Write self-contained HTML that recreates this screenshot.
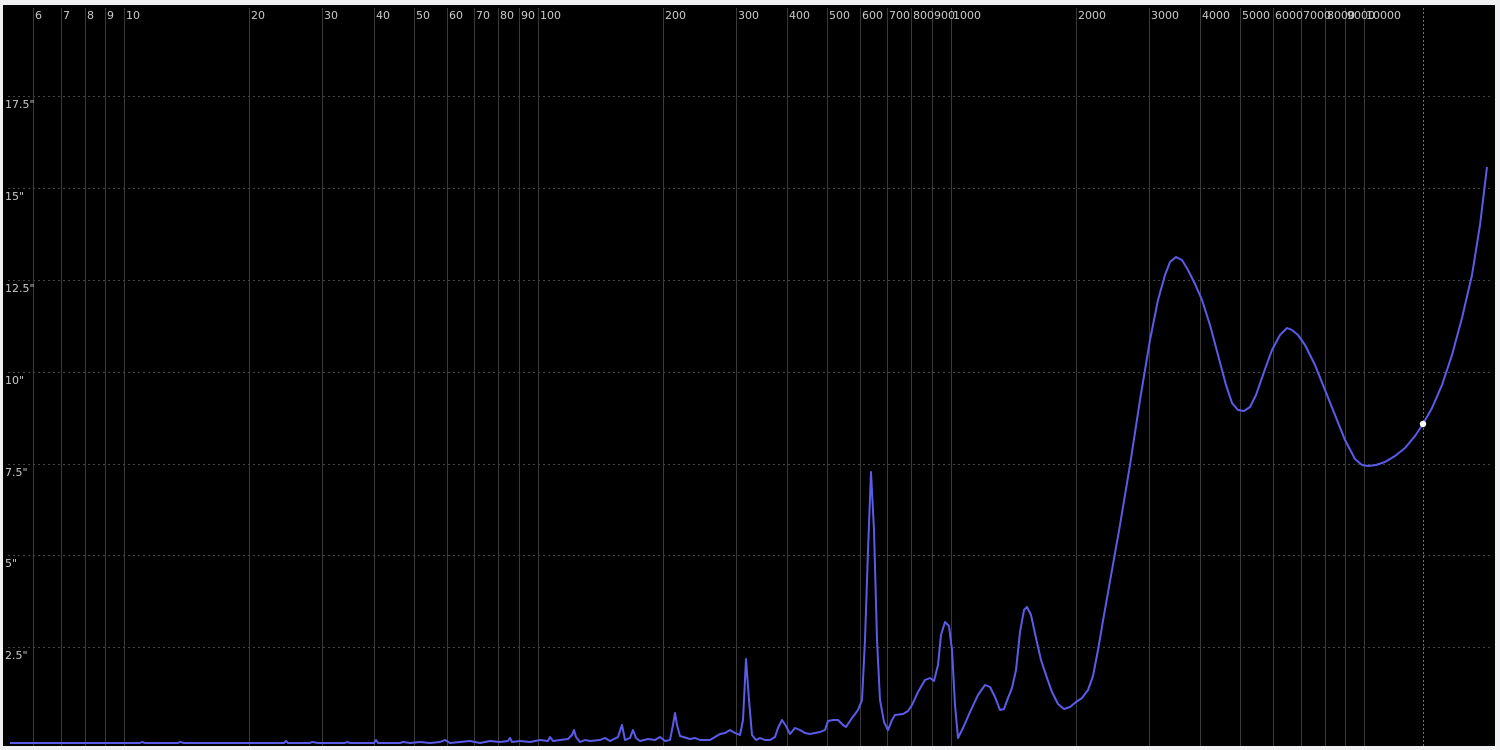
<!DOCTYPE html>
<html><head><style>
html,body{margin:0;padding:0;background:#f0f0f2;width:1500px;height:750px;overflow:hidden}
svg{position:absolute;left:0;top:0}
text{font-family:"DejaVu Sans","Liberation Sans",sans-serif;font-size:11px;fill:#c8c8c8}
</style></head><body>
<svg width="1500" height="750" viewBox="0 0 1500 750">
<rect x="3" y="5" width="1492" height="741" fill="#000"/>
<g stroke="#3a3a3a" stroke-width="1">
<line x1="33.5" y1="8" x2="33.5" y2="746"/><line x1="61.5" y1="8" x2="61.5" y2="746"/><line x1="85.5" y1="8" x2="85.5" y2="746"/><line x1="105.5" y1="8" x2="105.5" y2="746"/><line x1="124.5" y1="8" x2="124.5" y2="746"/>
<line x1="249.5" y1="8" x2="249.5" y2="746"/><line x1="322.5" y1="8" x2="322.5" y2="746"/><line x1="374.5" y1="8" x2="374.5" y2="746"/><line x1="414.5" y1="8" x2="414.5" y2="746"/><line x1="447.5" y1="8" x2="447.5" y2="746"/><line x1="474.5" y1="8" x2="474.5" y2="746"/><line x1="498.5" y1="8" x2="498.5" y2="746"/><line x1="519.5" y1="8" x2="519.5" y2="746"/><line x1="538.5" y1="8" x2="538.5" y2="746"/>
<line x1="663.5" y1="8" x2="663.5" y2="746"/><line x1="736.5" y1="8" x2="736.5" y2="746"/><line x1="787.5" y1="8" x2="787.5" y2="746"/><line x1="827.5" y1="8" x2="827.5" y2="746"/><line x1="860.5" y1="8" x2="860.5" y2="746"/><line x1="887.5" y1="8" x2="887.5" y2="746"/><line x1="911.5" y1="8" x2="911.5" y2="746"/><line x1="932.5" y1="8" x2="932.5" y2="746"/><line x1="951.5" y1="8" x2="951.5" y2="746"/>
<line x1="1076.5" y1="8" x2="1076.5" y2="746"/><line x1="1149.5" y1="8" x2="1149.5" y2="746"/><line x1="1200.5" y1="8" x2="1200.5" y2="746"/><line x1="1240.5" y1="8" x2="1240.5" y2="746"/><line x1="1273.5" y1="8" x2="1273.5" y2="746"/><line x1="1301.5" y1="8" x2="1301.5" y2="746"/><line x1="1325.5" y1="8" x2="1325.5" y2="746"/><line x1="1345.5" y1="8" x2="1345.5" y2="746"/><line x1="1364.5" y1="8" x2="1364.5" y2="746"/>
</g>
<line x1="1423.5" y1="8" x2="1423.5" y2="746" stroke="#7a7a10" stroke-dasharray="2,2"/>
<g stroke="#444" stroke-dasharray="2,3">
<line x1="8" y1="96.5" x2="1492" y2="96.5"/><line x1="8" y1="188.5" x2="1492" y2="188.5"/><line x1="8" y1="280.5" x2="1492" y2="280.5"/><line x1="8" y1="372.5" x2="1492" y2="372.5"/><line x1="8" y1="464.5" x2="1492" y2="464.5"/><line x1="8" y1="555.5" x2="1492" y2="555.5"/><line x1="8" y1="647.5" x2="1492" y2="647.5"/>
</g>
<g>
<text x="35" y="19">6</text><text x="63" y="19">7</text><text x="87" y="19">8</text><text x="107" y="19">9</text><text x="126" y="19">10</text>
<text x="251" y="19">20</text><text x="324" y="19">30</text><text x="376" y="19">40</text><text x="416" y="19">50</text><text x="449" y="19">60</text><text x="476" y="19">70</text><text x="500" y="19">80</text><text x="521" y="19">90</text><text x="540" y="19">100</text>
<text x="665" y="19">200</text><text x="738" y="19">300</text><text x="789" y="19">400</text><text x="829" y="19">500</text><text x="862" y="19">600</text><text x="889" y="19">700</text><text x="913" y="19">800</text><text x="934" y="19">900</text><text x="953" y="19">1000</text>
<text x="1078" y="19">2000</text><text x="1151" y="19">3000</text><text x="1202" y="19">4000</text><text x="1242" y="19">5000</text><text x="1275" y="19">6000</text><text x="1303" y="19">7000</text><text x="1327" y="19">8000</text><text x="1347" y="19">9000</text><text x="1366" y="19">10000</text>
<text x="5" y="108">17.5"</text><text x="5" y="200">15"</text><text x="5" y="292">12.5"</text><text x="5" y="384">10"</text><text x="5" y="476">7.5"</text><text x="5" y="567">5"</text><text x="5" y="659">2.5"</text>
</g>
<polyline fill="none" stroke="#5b5be8" stroke-width="2" stroke-linejoin="round" points="10,743 140,743 142,742 145,743 178,743 180,742 184,743 284,743 286,741 288,743 310,743 312,742 318,743 345,743 347,742 350,743 374,743 376,740 378,743 400,743 403,742 410,743 420,742 430,743 440,742 445,740 450,743 460,742 470,741 480,743 490,741 500,742 508,741 510,738 512,742 520,741 530,742 540,740 548,741 550,737 553,741 560,740 568,739 572,735 574,730 576,737 580,742 585,740 590,741 600,740 605,738 610,741 614,739 618,737 622,725 625,740 630,738 633,730 636,738 640,741 648,739 655,740 660,737 665,741 670,740 673,725 675,713 677,725 680,736 690,739 695,738 700,740 710,740 715,737 720,734 725,733 730,730 735,733 740,735 743,720 746,659 749,700 752,735 756,740 760,738 765,740 770,740 775,737 778,728 782,720 786,726 790,734 795,728 800,730 805,733 810,734 815,733 820,732 825,730 828,721 833,720 838,720 843,725 846,727 852,718 858,710 862,700 865,640 868,550 871,472 874,530 877,640 880,700 884,722 888,730 892,720 895,715 903,714 908,711 912,705 918,692 925,680 930,678 934,681 938,665 941,635 945,622 949,626 952,650 955,705 958,738 963,728 970,712 978,695 985,685 990,687 995,697 1000,710 1004,709 1008,698 1012,688 1016,670 1020,632 1024,610 1027,607 1031,615 1036,638 1041,660 1047,678 1052,692 1058,704 1064,709 1070,707 1076,702 1082,698 1088,690 1093,676 1098,650 1104,615 1112,570 1120,525 1130,465 1140,400 1150,340 1158,300 1165,275 1170,262 1176,257 1182,260 1188,270 1195,284 1202,300 1210,325 1218,355 1226,385 1232,403 1238,410 1244,411 1250,407 1256,395 1264,372 1272,350 1280,335 1287,328 1292,330 1298,335 1305,345 1315,365 1325,390 1335,415 1345,440 1355,459 1362,465 1368,466 1376,465 1385,462 1395,456 1405,448 1415,436 1423,424 1432,408 1442,385 1452,355 1462,318 1472,275 1480,225 1487,167"/>
<circle cx="1423" cy="424" r="3.2" fill="#fff"/>
</svg>
</body></html>
